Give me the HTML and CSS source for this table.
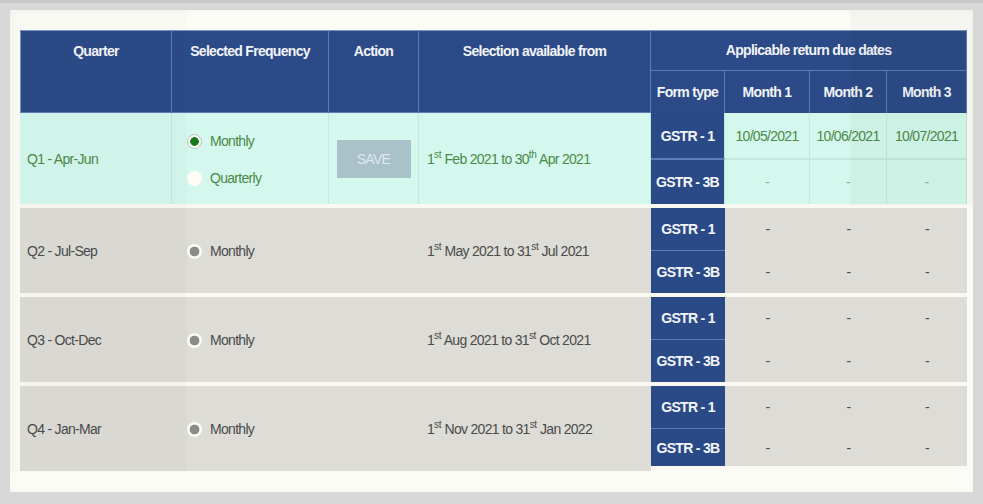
FILE: index.html
```html
<!DOCTYPE html>
<html lang="en">
<head>
<meta charset="utf-8">
<title>Return filing frequency</title>
<link rel="stylesheet" href="styles.css">
</head>
<body>
<div class="card">
  <table class="freq">
    <colgroup>
      <col class="c-q"><col class="c-f"><col class="c-a"><col class="c-s"><col class="c-t"><col class="c-m1"><col class="c-m2"><col class="c-m3">
    </colgroup>
    <thead>
      <tr class="h1">
        <th rowspan="2">Quarter</th>
        <th rowspan="2">Selected Frequency</th>
        <th rowspan="2">Action</th>
        <th rowspan="2">Selection available from</th>
        <th colspan="4" class="mid">Applicable return due dates</th>
      </tr>
      <tr class="h2">
        <th class="mid">Form type</th>
        <th class="mid">Month 1</th>
        <th class="mid">Month 2</th>
        <th class="mid">Month 3</th>
      </tr>
    </thead>
    <tbody class="active">
      <tr class="first r1a">
        <td rowspan="2" class="qtr">Q1 - Apr-Jun</td>
        <td rowspan="2" class="freqcell">
          <div class="radios">
            <label class="radio"><span class="dot on"></span>Monthly</label>
            <label class="radio"><span class="dot off"></span>Quarterly</label>
          </div>
        </td>
        <td rowspan="2" class="act"><button class="save" disabled>SAVE</button></td>
        <td rowspan="2" class="sel">1<sup>st</sup> Feb 2021 to 30<sup>th</sup> Apr 2021</td>
        <td class="form">GSTR - 1</td>
        <td class="date">10/05/2021</td>
        <td class="date">10/06/2021</td>
        <td class="date">10/07/2021</td>
      </tr>
      <tr class="r1b">
        <td class="form">GSTR - 3B</td>
        <td class="dash">-</td>
        <td class="dash">-</td>
        <td class="dash">-</td>
      </tr>
    </tbody>
    <tbody class="locked">
      <tr class="qa">
        <td rowspan="2" class="qtr">Q2 - Jul-Sep</td>
        <td rowspan="2" class="freqcell"><label class="radio"><span class="dot grey"></span>Monthly</label></td>
        <td rowspan="2" class="act"></td>
        <td rowspan="2" class="sel">1<sup>st</sup> May 2021 to 31<sup>st</sup> Jul 2021</td>
        <td class="form">GSTR - 1</td>
        <td class="dash">-</td><td class="dash">-</td><td class="dash">-</td>
      </tr>
      <tr class="qb">
        <td class="form">GSTR - 3B</td>
        <td class="dash">-</td><td class="dash">-</td><td class="dash">-</td>
      </tr>
    </tbody>
    <tbody class="locked">
      <tr class="qa">
        <td rowspan="2" class="qtr">Q3 - Oct-Dec</td>
        <td rowspan="2" class="freqcell"><label class="radio"><span class="dot grey"></span>Monthly</label></td>
        <td rowspan="2" class="act"></td>
        <td rowspan="2" class="sel">1<sup>st</sup> Aug 2021 to 31<sup>st</sup> Oct 2021</td>
        <td class="form">GSTR - 1</td>
        <td class="dash">-</td><td class="dash">-</td><td class="dash">-</td>
      </tr>
      <tr class="qb">
        <td class="form">GSTR - 3B</td>
        <td class="dash">-</td><td class="dash">-</td><td class="dash">-</td>
      </tr>
    </tbody>
    <tbody class="locked last">
      <tr class="qa">
        <td rowspan="2" class="qtr">Q4 - Jan-Mar</td>
        <td rowspan="2" class="freqcell"><label class="radio"><span class="dot grey"></span>Monthly</label></td>
        <td rowspan="2" class="act"></td>
        <td rowspan="2" class="sel">1<sup>st</sup> Nov 2021 to 31<sup>st</sup> Jan 2022</td>
        <td class="form">GSTR - 1</td>
        <td class="dash">-</td><td class="dash">-</td><td class="dash">-</td>
      </tr>
      <tr class="qb">
        <td class="form">GSTR - 3B</td>
        <td class="dash">-</td><td class="dash">-</td><td class="dash">-</td>
      </tr>
    </tbody>
  </table>
  <div class="tint tint-left"></div>
  <div class="tint tint-right"></div>
</div>
</body>
</html>
```

FILE: styles.css
```css
html, body {
  margin: 0;
  padding: 0;
}
body {
  background: #d7d7d7;
  border-top: 3px solid #c8c8c8;
  width: 983px;
  height: 501px;
  overflow: hidden;
  font-family: "Liberation Sans", Arial, sans-serif;
  font-size: 14px;
  letter-spacing: -0.7px;
}
.card {
  position: relative;
  margin: 7px 0 0 10px;
  width: 963px;
  height: 482px;
  background: #fdfdf8;
  box-sizing: border-box;
  padding: 20px 6px 0 10px;
  box-shadow: inset 0 0 8px rgba(0,0,0,0.04);
}
.freq {
  width: 947px;
  table-layout: fixed;
  border-collapse: separate;
  border-spacing: 0;
}
.c-q { width: 152px; }
.c-f { width: 157px; }
.c-a { width: 90px; }
.c-s { width: 232px; }
.c-t { width: 74px; }
.c-m1 { width: 85px; }
.c-m2 { width: 77px; }
.c-m3 { width: 80px; }

th {
  background: #2b4a87;
  color: #f2f4f8;
  font-weight: bold;
  text-align: center;
  vertical-align: top;
  padding: 12px 0 0;
  line-height: 17px;
  border-right: 1px solid #5d7bb2;
  border-bottom: 1px solid #5d7bb2;
}
thead tr.h1 th:first-child { border-left: 1px solid #7d93c2; }
thead tr.h1 th { border-top: 1px solid #7d93c2; }
th.mid { vertical-align: middle; padding: 0; }
thead tr.h2 th { border-bottom: 0; }
tr.h1 { height: 41px; }
tr.h2 { height: 42px; }

td {
  padding: 0;
  vertical-align: middle;
}
.active td {
  background: #d5f8ee;
  color: #4a8a46;
  border-right: 1px solid #c4e6dc;
}
.active tr.r1a { height: 45px; }
.active tr.r1b { height: 46px; }
.active tr.r1b td { border-top: 2px solid #c6e8de; }
.active tr.r1b td.form { border-top-color: #5b7cb5; }

.locked td {
  background: #dddcd6;
  color: #4b4b4b;
}
.locked tr.qa { height: 46px; }
.locked tr.qa td { border-top: 4px solid #f9f9f2; }
.locked tr.qb { height: 43px; }
.locked tr.qb td { border-top: 1px solid #dddcd6; }
.locked tr.qb td.form { border-top: 1px solid #5b7cb5; }
.locked.last tr.qb td { border-bottom: 5px solid #f9f9f2; }

.qtr { padding-left: 7px; }
.sel { padding-left: 8px; }
sup {
  font-size: 10px;
  line-height: 0;
  vertical-align: 6px;
  letter-spacing: -0.3px;
}
.form {
  background: #2a4a87 !important;
  color: #f4f6fa !important;
  font-weight: bold;
  text-align: center;
}
.date {
  text-align: center;
  color: #5b9b52;
}
.dash {
  text-align: center;
  color: #8a8a86;
}
.active .dash { color: #8bb0a2; }

.freqcell { padding-left: 15px; }
.radios {
  display: flex;
  flex-direction: column;
  gap: 20px;
  padding-top: 3px;
}
.radio {
  display: flex;
  align-items: center;
  gap: 8px;
  line-height: 17px;
}
.locked .radio { padding-top: 2px; }
.dot {
  width: 15px;
  height: 15px;
  border-radius: 50%;
  box-sizing: border-box;
  flex: none;
  background: #fdfdf6;
}
.dot.on {
  border: 1px solid #b3c4bb;
  background: radial-gradient(circle, #157a1c 0 4px, #fbfbf4 4.6px);
}
.dot.grey {
  background: radial-gradient(circle, #8b8b87 0 4.6px, #fbfbf6 5.2px);
}
.act { text-align: center; }
.save {
  width: 74px;
  height: 38px;
  border: 0;
  background: #a9c1c9;
  color: #dce9ec;
  font-family: inherit;
  font-size: 14px;
  letter-spacing: -0.7px;
  padding: 0;
}

.tint {
  position: absolute;
  pointer-events: none;
}
.tint-left {
  left: 0;
  top: 0;
  width: 177px;
  height: 462px;
  background: rgba(40, 40, 30, 0.02);
}
.tint-right {
  left: 840px;
  top: 0;
  width: 123px;
  height: 195px;
  background: rgba(30, 60, 40, 0.035);
}
```
